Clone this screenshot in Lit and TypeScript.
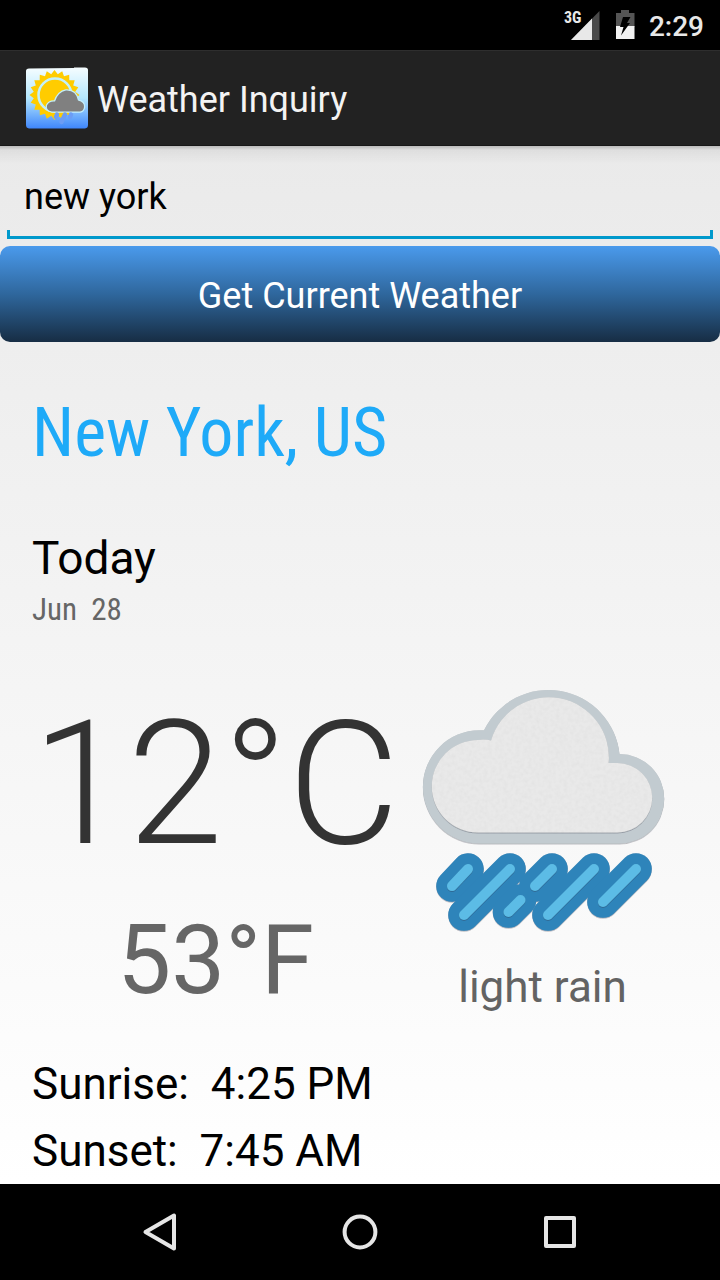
import { LitElement, html, css, svg } from "lit";
import { customElement, state } from "lit/decorators.js";

const RAIN = [
  [452, 887, 468, 870],
  [464, 916, 510, 870],
  [508.5, 913, 520.5, 901],
  [535, 887, 552, 870],
  [548, 916, 594, 870],
  [603, 903, 636, 870],
];

const sunPoints = (cx: number, cy: number, outer: number, inner: number, teeth: number) =>
  Array.from({ length: teeth * 2 }, (_, i) => {
    const r = i % 2 ? inner : outer;
    const a = (Math.PI * i) / teeth - Math.PI / 2;
    return `${(cx + r * Math.cos(a)).toFixed(1)},${(cy + r * Math.sin(a)).toFixed(1)}`;
  }).join(" ");

@customElement("status-bar")
class StatusBar extends LitElement {
  static styles = css`
    :host {
      display: flex;
      justify-content: flex-end;
      align-items: center;
      gap: 14px;
      height: 50px;
      padding: 0 16px;
      background: #000;
      color: #e8e8e8;
    }
    .signal {
      position: relative;
      width: 36px;
      height: 30px;
    }
    .net {
      position: absolute;
      left: 0;
      top: 0;
      font: 700 16px/16px "Roboto Condensed", Roboto, sans-serif;
    }
    .signal svg {
      display: block;
    }
    .time {
      padding-top: 4px;
      font: 500 28px/32px Roboto, sans-serif;
    }
  `;
  render() {
    return html`
      <div class="signal">
        <svg width="36" height="30" viewBox="0 0 36 30" aria-hidden="true">
          <path d="M35.500 1V30H7Z" fill="#4a4a4a" />
          <path d="M28 8.500V30H7Z" fill="#e8e8e8" />
        </svg>
        <span class="net">3G</span>
      </div>
      <svg width="21" height="30" viewBox="-1 0 21 30" aria-hidden="true">
        <path d="M1 3H6V0H14V3H19.500V17H1Z" fill="#555" />
        <path d="M1 16H19.500V29H1Z" fill="#f2f2f2" />
        <path d="M8 7H15.500L12 13H15L6 25.500L8.500 17H5Z" fill="#000" />
      </svg>
      <span class="time">2:29</span>
    `;
  }
}

@customElement("app-bar")
class AppBar extends LitElement {
  static styles = css`
    :host {
      display: flex;
      align-items: center;
      gap: 9px;
      box-sizing: border-box;
      height: 96px;
      padding: 0 26px;
      background: #222;
      border-top: 1px solid #2e2e2e;
      border-bottom: 1px solid #181818;
    }
    .title {
      margin: 0;
      padding-top: 4px;
      color: #f3f3f3;
      font: 400 36px/44px Roboto, sans-serif;
    }
  `;
  render() {
    return html`
      <svg width="62" height="62" viewBox="0 0 62 62" aria-hidden="true">
        <defs>
          <linearGradient id="sky" x1="0" y1="0" x2="0" y2="1">
            <stop offset="0" stop-color="#f6fdff" />
            <stop offset="0.5" stop-color="#b4e8ff" />
            <stop offset="1" stop-color="#3f86fa" />
          </linearGradient>
        </defs>
        <path d="M3 1.500L48 1V.5H59Q62 .5 62 3V58Q62 61 59 61.500H3Q0 61 0 58V4Q0 1.500 3 1.500Z" fill="url(#sky)" />
        <polygon points=${sunPoints(28.5, 28, 25, 21, 20)} fill="#fc0" />
        <circle cx="29" cy="28" r="16.500" fill="#fc0" stroke="#c3f0fb" stroke-width="2.500" />
        <path
          d="M26 44.500Q20 43.500 21 38.500Q23 34 29 34.500Q32 25 40 23.500Q50 23 52 33.500Q58.500 35 58 40Q57.500 44 54 44.500Z"
          fill="#808080" stroke="#c3effb" stroke-width="2.500" paint-order="stroke"
        />
        <path d="M31 47.500L30 50M39 47.500L35.500 55M45 47.500L44 50" stroke="#6c9df5" stroke-width="4.500" stroke-linecap="round" />
      </svg>
      <h1 class="title">Weather Inquiry</h1>
    `;
  }
}

@customElement("rain-cloud")
class RainCloud extends LitElement {
  static styles = css`
    :host,
    svg {
      display: block;
    }
  `;
  render() {
    return html`
      <svg width="246" height="248" viewBox="420 688 246 248" role="img" aria-label="light rain">
        <defs>
          <filter id="paper" filterUnits="userSpaceOnUse" x="420" y="688" width="246" height="248">
            <feTurbulence type="fractalNoise" baseFrequency="0.25" numOctaves="2" seed="4" />
            <feColorMatrix values="0 0 0 0 0.4  0 0 0 0 0.4  0 0 0 0 0.4  0.2 0 0 0 -0.07" />
            <feComposite in2="SourceGraphic" operator="in" result="grain" />
            <feMerge><feMergeNode in="SourceGraphic" /><feMergeNode in="grain" /></feMerge>
          </filter>
          <filter id="edge" filterUnits="userSpaceOnUse" x="420" y="688" width="246" height="248">
            <feDropShadow dx="0" dy="0.5" stdDeviation="0.7" flood-color="#334" flood-opacity="0.6" />
          </filter>
        </defs>
        <g filter="url(#edge)">
          <path
            d="M479.500 844.500A56.600 56.600 0 0 1 479.500 731.300H484A71.500 71.500 0 0 1 619.500 755A44.700 44.700 0 0 1 619.500 844.500Z"
            fill="#c2cbd0"
          />
        </g>
        <g filter="url(#edge)">
          <path
            filter="url(#paper)"
            d="M478 833.500A46.200 46.200 0 0 1 478 741Q485 740 491 741.500A60.200 60.200 0 0 1 608.700 764H617.500A34.700 34.700 0 0 1 617.500 833.500Z"
            fill="#e9e9e9"
          />
        </g>
        <g filter="url(#edge)" stroke="#2f84ba" stroke-width="31.500" stroke-linecap="round">
          ${RAIN.map(([a, b, c, d]) => svg`<line x1=${a} y1=${b} x2=${c} y2=${d} />`)}
        </g>
        <g filter="url(#edge)" stroke="#5bbce6" stroke-width="10" stroke-linecap="round">
          ${RAIN.map(([a, b, c, d]) => svg`<line x1=${a} y1=${b} x2=${c} y2=${d} />`)}
        </g>
      </svg>
    `;
  }
}

@customElement("nav-bar")
class NavBar extends LitElement {
  static styles = css`
    :host {
      display: flex;
      justify-content: center;
      gap: 60px;
      height: 96px;
      background: #000;
    }
    .key {
      display: grid;
      place-items: center;
      width: 140px;
      padding: 0;
      border: 0;
      background: none;
    }
    .glyph {
      fill: none;
      stroke: #e6e6e6;
      stroke-width: 4;
      stroke-linejoin: round;
    }
  `;
  render() {
    return html`
      <button class="key" aria-label="Back">
        <svg class="glyph" width="40" height="40" viewBox="0 0 40 40"><path d="M34 3.500V36.500L5.500 20Z" /></svg>
      </button>
      <button class="key" aria-label="Home">
        <svg class="glyph" width="40" height="40" viewBox="0 0 40 40"><circle cx="20" cy="20" r="15.400" /></svg>
      </button>
      <button class="key" aria-label="Recent apps">
        <svg class="glyph" width="40" height="40" viewBox="0 0 40 40"><path d="M6 6H34V34H6Z" /></svg>
      </button>
    `;
  }
}

@customElement("app-root")
class AppRoot extends LitElement {
  static styles = css`
    :host {
      display: flex;
      flex-direction: column;
      min-height: 100vh;
      font-family: Roboto, sans-serif;
      color: #000;
    }
    .page {
      flex: 1;
      background:
        linear-gradient(rgba(0, 0, 0, 0.2), rgba(0, 0, 0, 0.05) 4px, transparent 18px),
        linear-gradient(#eaeaea, #fff);
    }
    .field {
      display: block;
      padding: 0 7px 7px;
    }
    .query {
      display: block;
      box-sizing: border-box;
      width: 100%;
      height: 93px;
      padding: 8px 17px 0;
      border: 0;
      outline: 0;
      background:
        linear-gradient(#09c, #09c) left bottom / 100% 3px no-repeat,
        linear-gradient(#09c, #09c) left bottom / 3px 9px no-repeat,
        linear-gradient(#09c, #09c) right bottom / 3px 9px no-repeat;
      color: #000;
      font: 400 36px/44px Roboto, sans-serif;
    }
    .submit {
      display: block;
      width: 100%;
      height: 96px;
      padding: 4px 0 0;
      border: 0;
      border-radius: 10px;
      background: linear-gradient(#4a9aec, #2f679d 50%, #172d44);
      color: #fff;
      font: 400 36px/44px Roboto, sans-serif;
    }
    .report {
      padding: 51px 32px 0;
    }
    .city {
      margin: 0;
      color: #1eaaf8;
      font: 400 68px/80px "Roboto Condensed", Roboto, sans-serif;
    }
    .today {
      margin: 57px 0 4px;
      font: 400 46px/56px Roboto, sans-serif;
    }
    .date {
      margin: 0;
      color: #666;
      font: 400 31px/40px "Roboto Condensed", Roboto, sans-serif;
      white-space: pre;
    }
    .now {
      display: flex;
      gap: 20px;
      padding: 54px 0 42px;
    }
    .temps,
    .sky {
      display: flex;
      flex-direction: column;
      align-items: center;
    }
    .temps {
      gap: 20px;
    }
    .sky {
      gap: 24px;
      padding-top: 3px;
    }
    .celsius {
      color: #333;
      font: 300 172px/200px Roboto, sans-serif;
    }
    .fahrenheit {
      color: #666;
      font: 400 96px/112px Roboto, sans-serif;
    }
    .label {
      color: #636363;
      font: 400 44px/56px Roboto, sans-serif;
    }
    .sun-times {
      display: flex;
      flex-direction: column;
      gap: 15px;
    }
    .sun {
      margin: 0;
      font: 400 44px/52px Roboto, sans-serif;
      white-space: pre;
    }
  `;

  @state() query = "new york";

  render() {
    return html`
      <status-bar></status-bar>
      <app-bar></app-bar>
      <main class="page">
        <label class="field">
          <input
            class="query"
            type="text"
            aria-label="City"
            .value=${this.query}
            @input=${(e: Event) => (this.query = (e.target as HTMLInputElement).value)}
          />
        </label>
        <button class="submit">Get Current Weather</button>
        <section class="report">
          <h2 class="city">New York, US</h2>
          <h3 class="today">Today</h3>
          <p class="date">Jun  28</p>
          <div class="now">
            <div class="temps">
              <span class="celsius">12°C</span>
              <span class="fahrenheit">53°F</span>
            </div>
            <div class="sky">
              <rain-cloud></rain-cloud>
              <span class="label">light rain</span>
            </div>
          </div>
          <div class="sun-times">
            <p class="sun">Sunrise:  4:25 PM</p>
            <p class="sun">Sunset:  7:45 AM</p>
          </div>
        </section>
      </main>
      <nav-bar></nav-bar>
    `;
  }
}
